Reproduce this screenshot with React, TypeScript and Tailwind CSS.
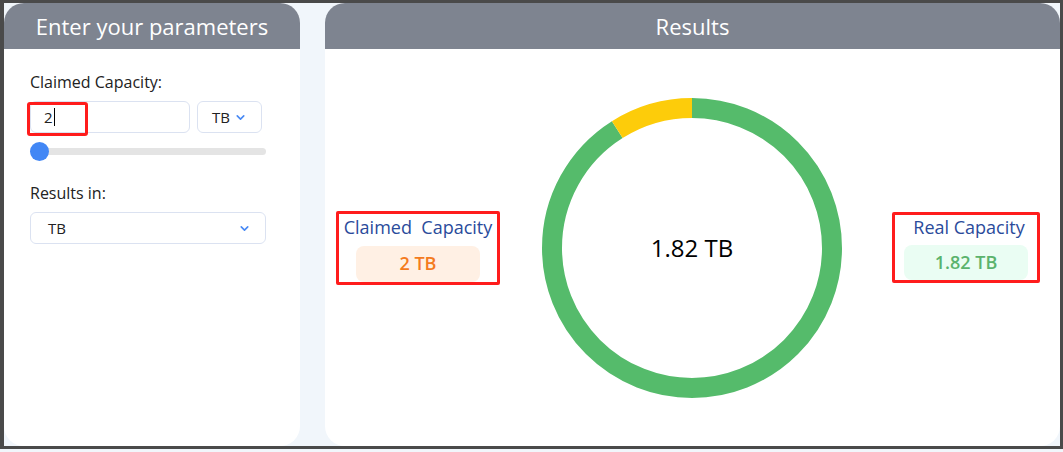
import { ChevronDown } from "lucide-react";

const R = 140;
const C = 2 * Math.PI * R;
const realPart = 1.82 / 2;

const Donut = () => {
  return (
    <div className="relative h-[300px] w-[300px] shrink-0">
      <svg width="300" height="300" viewBox="0 0 300 300">
        <g transform="rotate(-90 150 150)">
          <circle
            cx="150"
            cy="150"
            r={R}
            fill="none"
            stroke="#55bb6b"
            strokeWidth="20"
            strokeDasharray={`${C * realPart} ${C}`}
          />
          <circle
            cx="150"
            cy="150"
            r={R}
            fill="none"
            stroke="#fdcc0a"
            strokeWidth="20"
            strokeDasharray={`${C * (1 - realPart)} ${C}`}
            strokeDashoffset={-C * realPart}
          />
        </g>
      </svg>
      <div className="absolute inset-0 flex items-center justify-center text-[24px] font-medium text-black">
        1.82 TB
      </div>
    </div>
  );
};

export default function App() {
  return (
    <div className="h-[452px] w-[1063px] bg-[#f1f6fb] font-['Open_Sans',sans-serif]">
      <div className="flex h-[449px] w-[1063px] gap-[25px] border-[3px] border-l-4 border-[#4a4a4a] bg-[#f1f6fb]">
        {/* parameters */}
        <div className="flex h-full w-[296px] shrink-0 flex-col overflow-hidden rounded-[20px] bg-white">
          <div className="flex h-[46px] items-center justify-center bg-[#7e8490] text-[22px] text-white">
            Enter your parameters
          </div>
          <div className="flex flex-col pl-[26px] pt-[22px]">
            <div className="text-[16px] leading-[22px] text-[#222]">Claimed Capacity:</div>
            <div className="mt-[8px] flex gap-[7px]">
              <div className="relative flex h-[32px] w-[160px] items-center rounded-[6px] border border-[#dbe2f1] bg-white pl-[13px] text-[15px] text-[#222]">
                2<span className="ml-[1px] h-[18px] w-px bg-black" />
                <div className="absolute left-[-4px] top-0 h-[34px] w-[61px] rounded-[3px] border-[3px] border-[#ff1c1c]" />
              </div>
              <div className="flex h-[32px] w-[65px] items-center justify-center gap-[4px] rounded-[6px] border border-[#dbe2f1] bg-white text-[15px] text-[#222]">
                TB
                <ChevronDown size={13} strokeWidth={3} className="text-[#4a8af4]" />
              </div>
            </div>
            <div className="relative mt-[9px] flex h-[19px] w-[236px] items-center">
              <div className="h-[7px] w-full rounded-full bg-[#e4e4e4]" />
              <div className="absolute left-0 top-0 h-[19px] w-[19px] rounded-full bg-[#4287f5]" />
            </div>
            <div className="mt-[21px] text-[16px] leading-[22px] text-[#222]">Results in:</div>
            <div className="mt-[8px] flex h-[32px] w-[236px] items-center justify-between rounded-[6px] border border-[#dbe2f1] bg-white pl-[17px] pr-[14px] text-[15px] text-[#222]">
              TB
              <ChevronDown size={13} strokeWidth={3} className="text-[#4a8af4]" />
            </div>
          </div>
        </div>

        {/* results */}
        <div className="flex h-full flex-1 flex-col overflow-hidden rounded-[20px] bg-white">
          <div className="flex h-[46px] shrink-0 items-center justify-center bg-[#7e8490] text-[22px] text-white">
            Results
          </div>
          <div className="flex flex-1 items-center pl-[11px]">
            <div className="flex w-[164px] shrink-0 flex-col items-center rounded-[2px] border-[3px] border-[#ff1c1c] pt-[1px]">
              <div className="whitespace-pre text-[18px] leading-[24px] text-[#2a4b9b]">Claimed  Capacity</div>
              <div className="mt-[7px] flex h-[36px] w-[124px] items-center justify-center rounded-[8px] bg-[#fff0e4] text-[18px] font-semibold text-[#f47b1e]">
                2 TB
              </div>
            </div>
            <div className="ml-[42px]">
              <Donut />
            </div>
            <div className="ml-[50px] flex w-[148px] shrink-0 flex-col items-center rounded-[2px] border-[3px] border-[#ff1c1c]">
              <div className="pl-[6px] text-[18px] leading-[24px] text-[#2a4b9b]">Real Capacity</div>
              <div className="mt-[6px] flex h-[35px] w-[124px] items-center justify-center rounded-[8px] bg-[#eafdf3] text-[18px] font-semibold text-[#5bb36d]">
                1.82 TB
              </div>
            </div>
          </div>
        </div>
      </div>
    </div>
  );
}
